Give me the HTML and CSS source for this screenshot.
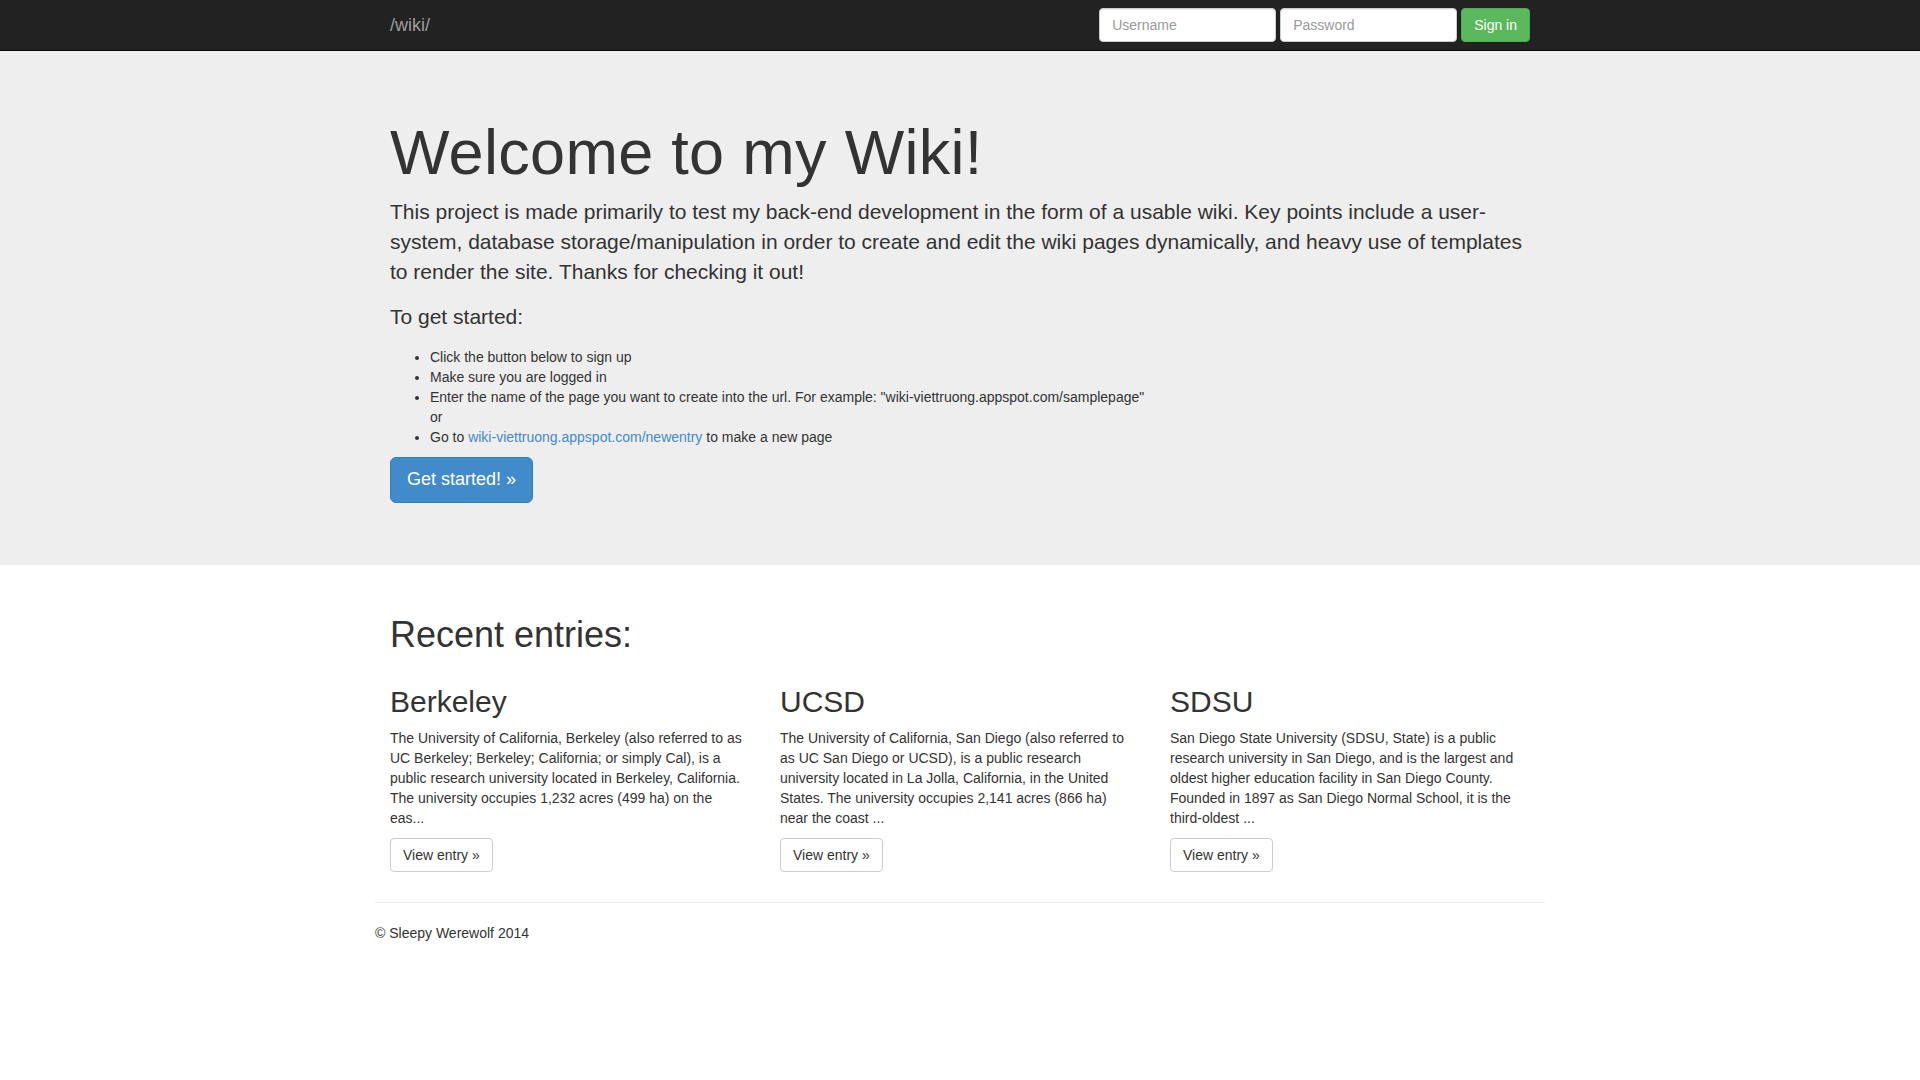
FILE: index.html
```html
<!DOCTYPE html>
<html lang="en">
<head>
<meta charset="utf-8">
<title>/wiki/</title>
<link rel="stylesheet" href="styles.css">
</head>
<body>
<nav class="navbar">
  <div class="container navbar-inner">
    <a class="brand" href="#">/wiki/</a>
    <form class="signin">
      <input type="text" class="field" placeholder="Username">
      <input type="password" class="field" placeholder="Password">
      <button type="button" class="btn btn-success">Sign in</button>
    </form>
  </div>
</nav>
<div class="jumbotron">
  <div class="container">
    <h1>Welcome to my Wiki!</h1>
    <p>This project is made primarily to test my back-end development in the form of a usable wiki. Key points include a user-system, database storage/manipulation in order to create and edit the wiki pages dynamically, and heavy use of templates to render the site. Thanks for checking it out!</p>
    <p>To get started:</p>
    <ul>
      <li>Click the button below to sign up</li>
      <li>Make sure you are logged in</li>
      <li>Enter the name of the page you want to create into the url. For example: "wiki-viettruong.appspot.com/samplepage"<br>or</li>
      <li>Go to <a href="#">wiki-viettruong.appspot.com/newentry</a> to make a new page</li>
    </ul>
    <p class="cta"><a class="btn btn-primary btn-lg" href="#">Get started! &raquo;</a></p>
  </div>
</div>
<div class="container main">
  <h1 class="section-title">Recent entries:</h1>
  <div class="entries">
    <div class="entry">
      <h2>Berkeley</h2>
      <p class="desc">The University of California, Berkeley (also referred to as UC Berkeley; Berkeley; California; or simply Cal), is a public research university located in Berkeley, California. The university occupies 1,232 acres (499 ha) on the eas...</p>
      <p><a class="btn btn-default" href="#">View entry &raquo;</a></p>
    </div>
    <div class="entry">
      <h2>UCSD</h2>
      <p class="desc">The University of California, San Diego (also referred to as UC San Diego or UCSD), is a public research university located in La Jolla, California, in the United States. The university occupies 2,141 acres (866 ha) near the coast ...</p>
      <p><a class="btn btn-default" href="#">View entry &raquo;</a></p>
    </div>
    <div class="entry">
      <h2>SDSU</h2>
      <p class="desc">San Diego State University (SDSU, State) is a public research university in San Diego, and is the largest and oldest higher education facility in San Diego County. Founded in 1897 as San Diego Normal School, it is the third-oldest ...</p>
      <p><a class="btn btn-default" href="#">View entry &raquo;</a></p>
    </div>
  </div>
  <div class="footer-wrap">
    <hr>
    <footer>
      <p>&copy; Sleepy Werewolf 2014</p>
    </footer>
  </div>
</div>
</body>
</html>
```

FILE: styles.css
```css
* { box-sizing: border-box; }
html, body { margin: 0; }
body {
  font-family: "Liberation Sans", Arial, Helvetica, sans-serif;
  font-size: 14px;
  line-height: 1.428571429;
  color: #333;
  background: #fff;
}
a { color: #428bca; text-decoration: none; }

.container { width: 1170px; margin: 0 auto; padding: 0 15px; }

.navbar { background: #222; border-bottom: 1px solid #080808; height: 51px; }
.navbar-inner { display: flex; justify-content: space-between; align-items: flex-start; height: 50px; }
.brand { color: #9d9d9d; font-size: 18px; line-height: 20px; padding: 15px 0; }
.signin { display: flex; gap: 4px; margin: 8px 0 0; }
.field {
  width: 177px; height: 34px; padding: 6px 12px;
  font: 14px/1.428571429 "Liberation Sans", Arial, sans-serif;
  color: #555; background: #fff;
  border: 1px solid #ccc; border-radius: 4px;
  box-shadow: inset 0 1px 1px rgba(0,0,0,.075);
}
.field::placeholder { color: #999; }

.btn {
  display: inline-block; padding: 6px 12px; margin: 0;
  font-family: inherit; font-size: 14px; font-weight: normal; line-height: 1.428571429;
  border: 1px solid transparent; border-radius: 4px;
  text-align: center; vertical-align: middle; white-space: nowrap; cursor: pointer;
}
.btn-success { color: #fff; background: #5cb85c; border-color: #4cae4c; }
.btn-primary { color: #fff; background: #428bca; border-color: #357ebd; }
.btn-default { color: #333; background: #fff; border-color: #ccc; }
.btn-lg { padding: 10px 16px; font-size: 18px; line-height: 1.33; border-radius: 6px; }

.jumbotron { background: #eee; padding: 47px 0 48px; margin-bottom: 30px; }
.jumbotron .container { display: flow-root; }
.jumbotron h1 { font-size: 63px; font-weight: 500; line-height: 1.1; margin: 20px 0 10px; letter-spacing: 0.3px; }
.jumbotron p { font-size: 21px; font-weight: 200; line-height: 30px; margin: 0 0 15px; }
.jumbotron .cta { display: flex; margin-top: 1px; margin-bottom: 14px; }
.jumbotron ul { margin: 0 0 10px; padding-left: 40px; }

.main { display: flow-root; }
.section-title { font-size: 36px; font-weight: 500; line-height: 1.1; margin: 20px 0 10px; }
.entries { display: grid; grid-template-columns: repeat(3, 1fr); column-gap: 30px; }
.entry h2 { font-size: 30px; font-weight: 500; line-height: 1.1; margin: 20px 0 10px; }
.entry p { margin: 0 0 10px; }
.entry .desc { padding-right: 5px; }

.footer-wrap { margin: 0 -15px; }
.footer-wrap hr { border: 0; border-top: 1px solid #eee; margin: 20px 0; height: 0; }
.footer-wrap p { margin: 0 0 10px; }
```
